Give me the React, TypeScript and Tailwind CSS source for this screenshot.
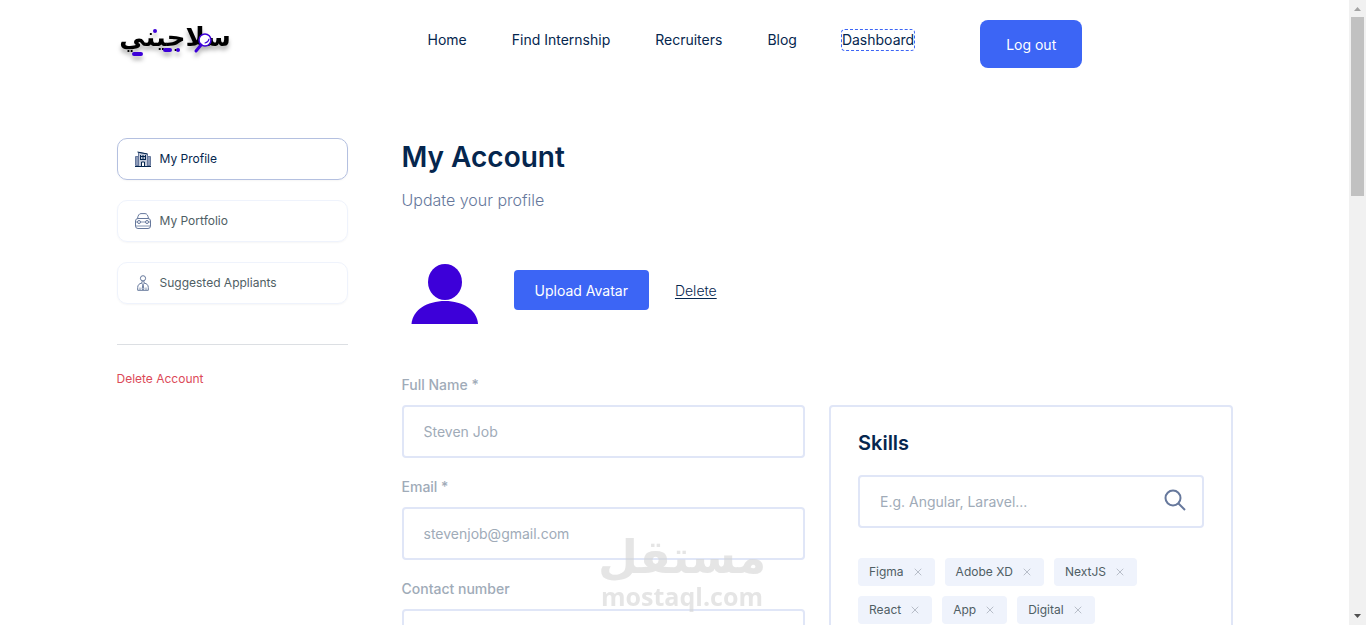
import type { ReactNode } from 'react'
import { X } from 'lucide-react'

const navLinks = ['Home', 'Find Internship', 'Recruiters', 'Blog']

const skills = ['Figma', 'Adobe XD', 'NextJS', 'React', 'App', 'Digital']

const fields = [
  { id: 'name', label: 'Full Name *', type: 'text', placeholder: 'Steven Job' },
  { id: 'email', label: 'Email *', type: 'email', placeholder: 'stevenjob@gmail.com' },
  { id: 'phone', label: 'Contact number', type: 'tel', placeholder: '01 - 234 567 89' },
]

function Logo() {
  return (
    <svg width="120" height="48" viewBox="0 0 120 48" role="img" aria-label="سلاجيني" className="overflow-visible drop-shadow-[0_4px_2px_rgba(0,0,0,0.3)]">
      <text x="58" y="26" textAnchor="middle" direction="rtl" className="fill-black font-['DejaVu_Sans',sans-serif] text-[26px] font-bold">سلاجيني</text>
      <g fill="none" stroke="#3d00d9">
        <circle cx="88" cy="20" r="6" fill="#fff" strokeWidth="1.5" />
        <path d="M84 25l-5 6" strokeWidth="3" strokeLinecap="round" />
        <path d="M92 19a5 5 0 0 1-4 4" strokeWidth="1.2" strokeLinecap="round" />
      </g>
      <g stroke="#3d00d9" strokeWidth="4" strokeLinecap="round">
        <path d="M38 11h.01M48 30h5M61 30h.01M17 34h7" />
      </g>
    </svg>
  )
}

function BuildingIcon() {
  return (
    <svg width="16" height="16" viewBox="0 0 16 16" fill="none" stroke="#05264e">
      <path d="M.5 5.500h3v9h-3zM12.500 5.500h3v9h-3z" fill="#8c9ab8" stroke="#66789c" />
      <path d="M3.500 15V1.500l9 1.500v12" fill="#c4cbdb" stroke="#66789c" />
      <path d="M5 5.500h6M5 8.500h6M5.500 4v5M8 4v5M10.500 4v5M0 15.500h16" />
      <path d="M6.500 15v-4h3v4" fill="#fff" />
      <path d="M2.500 1l10 2" />
    </svg>
  )
}

function CarIcon() {
  return (
    <svg width="16" height="16" viewBox="0 0 16 16" fill="none" stroke="#66789c">
      <path d="M2.500 5.500C3 2.500 4 .6 6 .6h4c2 0 3 1.900 3.500 4.900" />
      <rect x=".5" y="5.500" width="15" height="10" rx="2.500" />
      <circle cx="4" cy="9" r="1.500" />
      <circle cx="12" cy="9" r="1.500" />
      <path d="M5.500 9h5M.5 9h2M13.500 9h2M1 13h14" strokeWidth=".8" />
    </svg>
  )
}

function PersonIcon() {
  return (
    <svg width="16" height="16" viewBox="0 0 16 16" fill="none" stroke="#66789c">
      <circle cx="8" cy="3.300" r="2.600" />
      <path d="M7.300 6l-.6 2.200M8.700 6l.6 2.200" />
      <path d="M2.700 15.300v-2.800c0-2.500 1.500-4 4-4.300L8 9.500l1.300-1.300c2.500.3 4 1.800 4 4.300v2.800z" />
      <path d="M5 15v-2.500M11 15v-2.500" strokeWidth=".8" />
      <path d="M8 9.500l-.8 4 .8 1.500.8-1.500z" />
    </svg>
  )
}

function MenuItem({ icon, active, children }: { icon: ReactNode; active?: boolean; children: ReactNode }) {
  return (
    <li>
      <a
        href="#"
        className={`flex h-[42px] items-center gap-[9px] rounded-[10px] border px-[17px] text-[12px] shadow-[0_1px_2px_rgba(0,0,0,0.04)] ${active ? 'border-[#b4c0e0] text-[#05264e]' : 'border-[#eff3fc] text-[#4f5e64]'}`}
      >
        {icon}
        {children}
      </a>
    </li>
  )
}

function Watermark() {
  return (
    <div className="pointer-events-none absolute top-[530px] left-[599px] opacity-60">
      <svg width="166" height="84" viewBox="0 0 166 84" role="img" aria-label="مستقل mostaql.com" className="overflow-visible fill-[#d4d4d4]">
        <text x="83" y="43" textAnchor="middle" direction="rtl" className="font-['DejaVu_Sans',sans-serif] text-[46px] font-bold">مستقل</text>
        <text x="83" y="76" textAnchor="middle" className="font-['Open_Sans',sans-serif] text-[25px] font-bold">mostaql.com</text>
      </svg>
    </div>
  )
}

function Scrollbar() {
  return (
    <div className="flex w-[17px] shrink-0 flex-col items-center justify-between bg-[#f1f1f1]">
      <div className="flex flex-col items-center">
        <svg width="17" height="17" viewBox="0 0 17 17" fill="#a3a3a3"><path d="M5 11l3.500-4 3.500 4z" /></svg>
        <div className="h-[179px] w-[13px] bg-[#c1c1c1]" />
      </div>
      <svg width="17" height="17" viewBox="0 0 17 17" fill="#505050"><path d="M5 6l3.500 4L12 6z" /></svg>
    </div>
  )
}

export default function App() {
  return (
    <div className="relative flex h-screen bg-white font-['Inter',sans-serif] text-[#05264e]">
      <div className="min-w-0 flex-1 overflow-hidden">
        <div className="mx-auto max-w-[1116px]">
          <header className="flex h-[138px] items-start pt-5">
            <a href="#" className="w-[311px] shrink-0">
              <Logo />
            </a>
            <nav className="flex gap-[45px] pt-[10px] text-[14px] leading-5">
              {navLinks.map(link => (
                <a key={link} href="#">{link}</a>
              ))}
              <a href="#" className="rounded-[3px] outline-1 outline-dashed outline-[#3c65f5]">Dashboard</a>
            </nav>
            <button className="ml-[66px] h-12 rounded-lg bg-[#3c65f5] px-[26px] text-[14px] text-white">Log out</button>
          </header>

          <div className="flex gap-[54px]">
            <aside className="w-[231px] shrink-0">
              <ul className="space-y-5">
                <MenuItem icon={<BuildingIcon />} active>My Profile</MenuItem>
                <MenuItem icon={<CarIcon />}>My Portfolio</MenuItem>
                <MenuItem icon={<PersonIcon />}>Suggested Appliants</MenuItem>
              </ul>
              <hr className="mt-10 mb-6 border-[#dcdfe3]" />
              <a href="#" className="block text-[12px] leading-5 text-[#dc4a58]">Delete Account</a>
            </aside>

            <main className="min-w-0 flex-1">
              <h1 className="text-[28px] leading-[38px] font-semibold">My Account</h1>
              <p className="mt-3 text-[16px] leading-6 font-light text-[#66789c]">Update your profile</p>

              <div className="mt-11 flex items-center">
                <svg width="86" height="68" viewBox="0 0 86 68" fill="#3d00d9" role="img" aria-label="Avatar">
                  <ellipse cx="43" cy="26" rx="17" ry="18" />
                  <path d="M9.500 68c1-14 15.500-23 33.500-23s32 9 33 23z" />
                </svg>
                <button className="ml-[26px] h-10 rounded bg-[#3c65f5] px-[21px] text-[14px] text-white">Upload Avatar</button>
                <a href="#" className="ml-[26px] text-[14px] font-light underline underline-offset-2">Delete</a>
              </div>

              <div className="mt-[51px] grid grid-cols-2 gap-6">
                <form className="space-y-[19px]">
                  {fields.map(field => (
                    <div key={field.id}>
                      <label htmlFor={field.id} className="block text-[14px] leading-5 font-medium text-[#a0abb8]">{field.label}</label>
                      <input
                        id={field.id}
                        type={field.type}
                        placeholder={field.placeholder}
                        className="mt-[10px] block h-[53px] w-full rounded border-2 border-[#e0e6f7] px-5 text-[14px] placeholder:text-[#a0abb8]"
                      />
                    </div>
                  ))}
                </form>

                <section className="mt-[30px] h-[400px] rounded border-2 border-[#e0e6f7] px-[27px] pt-6">
                  <h2 className="text-[20px] leading-6 font-semibold">Skills</h2>
                  <div className="relative mt-5">
                    <input
                      type="text"
                      aria-label="Search skills"
                      placeholder="E.g. Angular, Laravel..."
                      className="block h-[53px] w-full rounded border-2 border-[#e0e6f7] pr-12 pl-5 text-[14px] placeholder:text-[#a0abb8]"
                    />
                    <svg width="22" height="22" viewBox="0 0 22 22" fill="none" stroke="#66789c" strokeWidth="2" className="absolute top-[14px] right-[18px]">
                      <circle cx="9" cy="9" r="7.500" />
                      <path d="M14.500 14.500l6.500 6.500" />
                    </svg>
                  </div>
                  <div className="mt-[30px] flex flex-wrap gap-[10px]">
                    {skills.map(skill => (
                      <span key={skill} className="flex h-7 items-center gap-2 rounded bg-[#eff3fc] px-[11px] text-[12px] text-[#4f5e64]">
                        {skill}
                        <button aria-label={`Remove ${skill}`}>
                          <X size={12} strokeWidth={2} className="text-[#b8bec9]" />
                        </button>
                      </span>
                    ))}
                  </div>
                </section>
              </div>
            </main>
          </div>
        </div>
      </div>
      <Scrollbar />
      <Watermark />
    </div>
  )
}
